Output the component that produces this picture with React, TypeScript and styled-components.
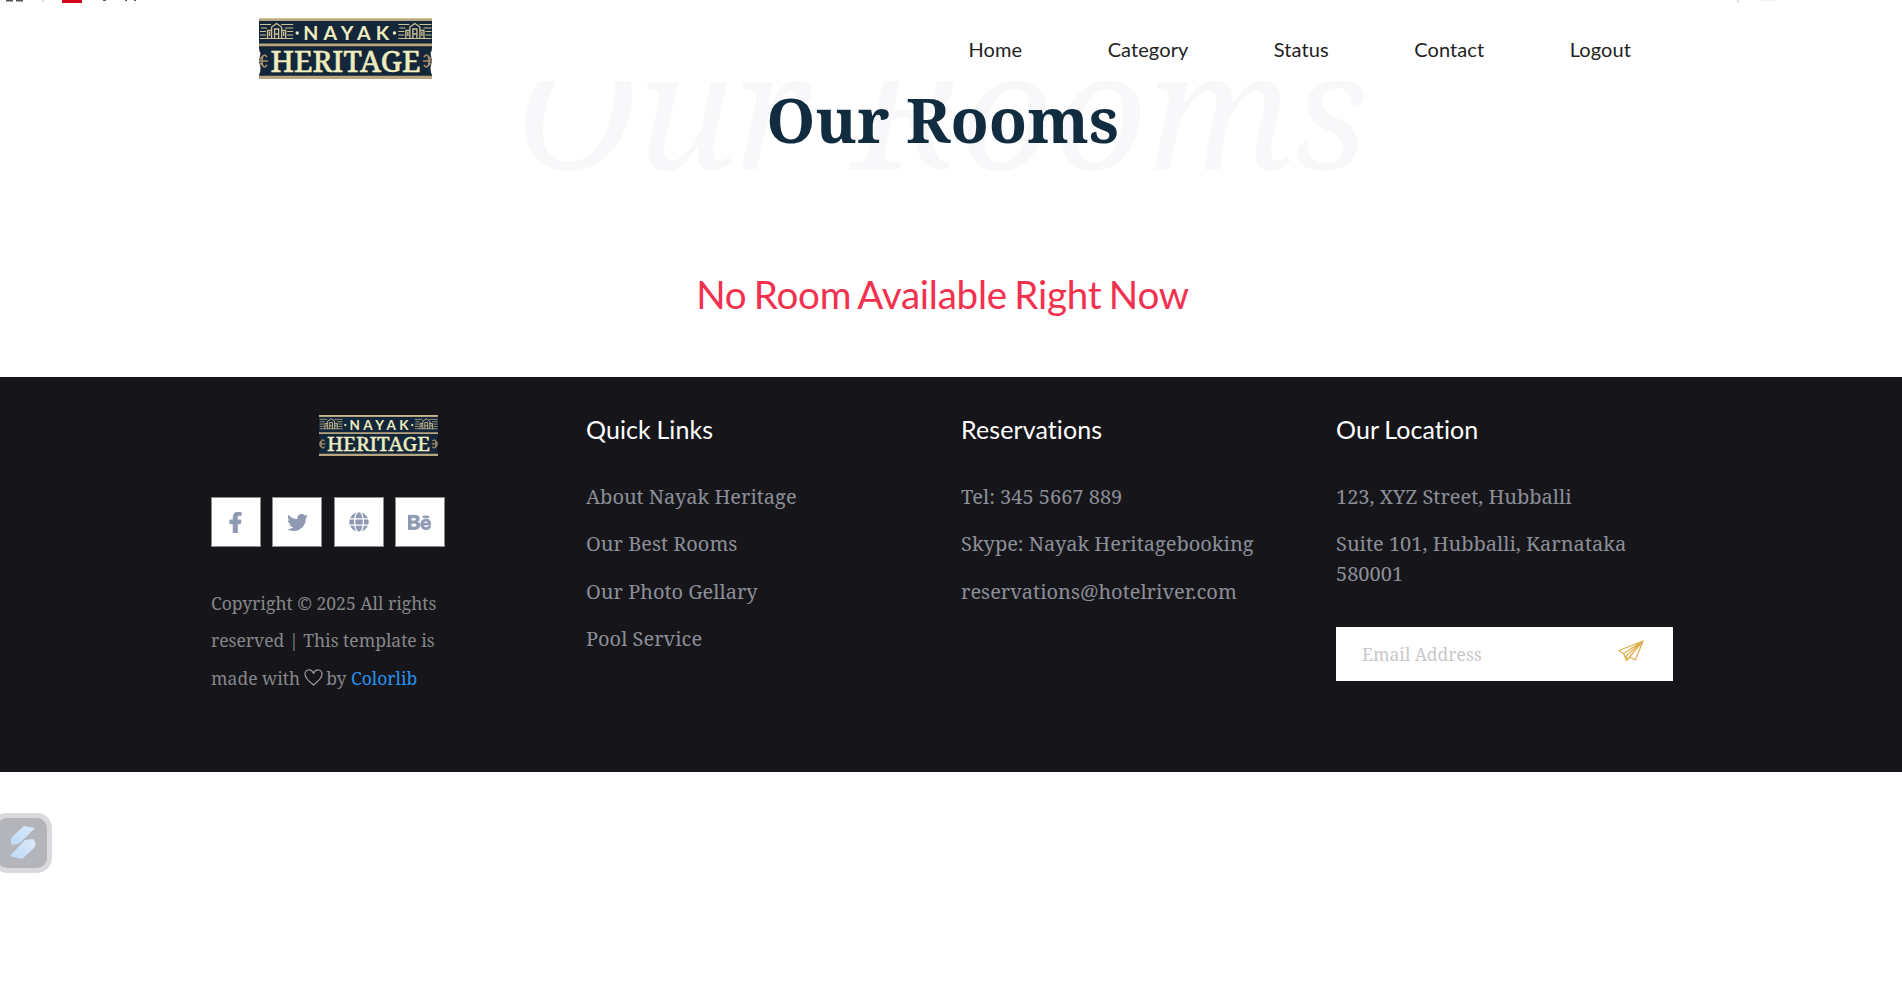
import React from "react";
import styled, { createGlobalStyle } from "styled-components";
import { FaBehance, FaFacebookF, FaGlobe, FaTwitter } from "react-icons/fa";

const serif = '"Noto Serif", "DejaVu Serif", serif';
const sans = 'Lato, "Open Sans", sans-serif';

const GlobalStyle = createGlobalStyle`
  *, *::before, *::after { box-sizing: border-box; }
  html { overflow: hidden; }
  body {
    margin: 0;
    background: #fff;
    font-family: ${serif};
    font-variant-ligatures: none;
    overflow: hidden;
  }
  h1, h2, h3, p, ul { margin: 0; padding: 0; font-weight: 400; }
  ul { list-style: none; }
  a { color: inherit; text-decoration: none; }
`;

const Header = styled.header`
  position: fixed;
  inset: 0 0 auto 0;
  z-index: 10;
  height: 81px;
  background: #fff;
  display: flex;
  justify-content: space-between;
  align-items: flex-start;
  padding: 18px 271px 0 259px;
`;

const Nav = styled.nav`
  display: flex;
  gap: 85.4px;
  padding-top: 16px;
  font-family: ${sans};
  font-size: 20px;
  line-height: 30px;
  letter-spacing: 0.1px;
  color: #222;
`;

const TabStrip = styled.svg`
  position: absolute;
  left: 0;
  top: 0;
`;

const Title = styled.section`
  position: relative;
  width: 1885px;
  padding-top: 81px;
  text-align: center;
`;

const Ghost = styled.span`
  position: absolute;
  left: 0;
  right: 0;
  top: 25px;
  font: italic 400 162.5px/1 ${serif};
  color: #f8f8fb;
`;

const Heading = styled.h1`
  position: relative;
  font-size: 62.5px;
  font-weight: 700;
  line-height: 75px;
  color: #112b3f;
`;

const Notice = styled.h2`
  width: 1885px;
  padding: 116px 0 60px;
  font-family: ${sans};
  font-size: 38.6px;
  line-height: 45px;
  letter-spacing: -0.25px;
  word-spacing: -2.2px;
  text-align: center;
  color: #f2314f;
`;

const Footer = styled.footer`
  height: 395px;
  padding: 37px 0 0 211px;
  background: #16161a;
  color: #8c8e98;
  display: grid;
  grid-template-columns: repeat(4, 337px);
  column-gap: 38px;
`;

const ColumnTitle = styled.h3`
  margin-bottom: 38px;
  font-family: ${sans};
  font-size: 25px;
  line-height: 30px;
  letter-spacing: 0.1px;
  word-spacing: -1px;
  color: #fff;
`;

const Links = styled.ul`
  display: flex;
  flex-direction: column;
  gap: 17.4px;
  font-size: 20px;
  line-height: 30px;
`;

const FooterLogo = styled.div`
  display: flex;
  padding: 1px 0 0 108px;
`;

const Socials = styled.div`
  display: flex;
  gap: 11.4px;
  margin: 41px 0 37.6px;
`;

const SocialButton = styled.a<{ $bold?: boolean }>`
  width: 50px;
  height: 50px;
  border: 1px solid #8b8b8b;
  background: #fff;
  color: #8f9ab2;
  display: flex;
  align-items: center;
  justify-content: center;
  svg {
    margin-right: ${(p) => (p.$bold ? "1px" : 0)};
    stroke: currentColor;
    stroke-width: ${(p) => (p.$bold ? 22 : 0)};
  }
`;

const Copyright = styled.p`
  width: 240px;
  font-size: 17.5px;
  line-height: 37.5px;
  color: #86878b;
  svg { margin: 0 -1.5px -1px -0.5px; }
  a { color: #2492ee; }
`;

const Subscribe = styled.form`
  display: flex;
  align-items: center;
  justify-content: space-between;
  height: 54px;
  margin-top: 38px;
  padding: 0 29px 0 26px;
  background: #fff;
`;

const EmailInput = styled.input`
  width: 220px;
  padding: 0;
  border: 0;
  outline: 0;
  font: 17.5px/26px ${serif};
  &::placeholder { color: #c8c8c8; opacity: 1; }
`;

const Send = styled.button`
  display: flex;
  padding: 0 0 6px;
  border: 0;
  background: none;
`;

const Widget = styled.div`
  position: fixed;
  left: -8px;
  top: 813px;
  width: 60px;
  height: 60px;
  border: 5px solid #d9d9de;
  border-radius: 15px;
  background: #b4b5ba;
`;

function House({ x }: { x: number }) {
  return (
    <g transform={`translate(${x} 0)`} stroke="#cfc193" fill="none" strokeWidth="1">
      <path d="M0 6.5h11M21 6.5h12M1 10h6M25 10h8M0 13.5h6M27 13.5h6M0 17h6M27 17h6M0 20.5h33" />
      <path d="M11.5 21V9L16.5 5.5 21.5 9V21M7.5 21V12.5h4M21.5 12.5h4V21M14.5 21V11h4V21M9.5 14v4M23.5 14v4M14.5 16h4" strokeWidth="1.3" />
    </g>
  );
}

function Logo({ width, height }: { width: number; height: number }) {
  return (
    <svg width={width} height={height} viewBox="0 0 172 61" preserveAspectRatio="none">
      <path d="M0 0H172V30Q172 33 170.500 35L172 43 170.500 50Q170.500 54 172 57V61H0V57Q1.500 54 1.500 50L0 43 1.500 35Q0 33 0 30Z" fill="#14263a" />
      <path d="M0 0H172V3H0ZM0 25.5H172V28.3H0ZM0 57.7H172V61H0Z" fill="#b7a57f" />
      <path d="M0 .6H172" stroke="#d8cda9" strokeWidth=".8" />
      <House x={1} />
      <House x={138.5} />
      <g fill="#eeecbe">
        <circle cx="38" cy="15" r="1.7" />
        <circle cx="134.7" cy="15" r="1.7" />
        <text x="44" y="22.3" fontFamily={sans} fontSize="19.5" fontWeight="700" textLength="85.500" lengthAdjust="spacing">NAYAK</text>
        <text x="11.5" y="54" fontFamily={serif} fontSize="29.5" fontWeight="500" textLength="149" lengthAdjust="spacingAndGlyphs" stroke="#eeecbe" strokeWidth=".4">HERITAGE</text>
      </g>
      <g fill="none" stroke="#a98e69" strokeWidth="1.7">
        <path d="M8 39Q5 35 3.500 39T3.500 47Q5 51 8 47M0 43H9M1 41 4 38M1 45 4 48" />
        <path d="M164 39Q167 35 168.500 39T168.500 47Q167 51 164 47M172 43H163M171 41 168 38M171 45 168 48" />
      </g>
    </svg>
  );
}

const navItems = ["Home", "Category", "Status", "Contact", "Logout"];
const quickLinks = ["About Nayak Heritage", "Our Best Rooms", "Our Photo Gellary", "Pool Service"];
const reservations = ["Tel: 345 5667 889", "Skype: Nayak Heritagebooking", "reservations@hotelriver.com"];
const address = ["123, XYZ Street, Hubballi", "Suite 101, Hubballi, Karnataka 580001"];

function LinkColumn({ title, items, children }: { title: string; items: string[]; children?: React.ReactNode }) {
  return (
    <div>
      <ColumnTitle>{title}</ColumnTitle>
      <Links>{items.map((t) => <li key={t}>{t}</li>)}</Links>
      {children}
    </div>
  );
}

export default function App() {
  return (
    <>
      <GlobalStyle />
      <Header>
        <TabStrip width="1902" height="4">
          <path d="M6 0h7v1.500H6zM16 0h7v1.500h-7zM103 0h3v1h-3zM125 0h2v1h-2zM134 0h2v1h-2z" fill="#555" />
          <path d="M62 0h20v3H62z" fill="#d4061c" />
          <path d="M42 0h2v2h-2zM1737 0h2v3h-2z" fill="#dcdce4" />
          <path d="M1760 0h18v1h-18z" fill="#f2f2f2" />
        </TabStrip>
        <Logo width={173} height={61} />
        <Nav>{navItems.map((t) => <a key={t} href="#">{t}</a>)}</Nav>
      </Header>
      <Title>
        <Ghost>Our Rooms</Ghost>
        <Heading>Our Rooms</Heading>
      </Title>
      <Notice>No Room Available Right Now</Notice>
      <Footer>
        <div>
          <FooterLogo><Logo width={119} height={41} /></FooterLogo>
          <Socials>
            <SocialButton href="#" $bold><FaFacebookF size={21} /></SocialButton>
            <SocialButton href="#"><FaTwitter size={21} /></SocialButton>
            <SocialButton href="#"><FaGlobe size={20} /></SocialButton>
            <SocialButton href="#" $bold><FaBehance size={23} /></SocialButton>
          </Socials>
          <Copyright>
            Copyright © 2025 All rights reserved | This template is made with{" "}
            <svg width="19" height="17" viewBox="0 0 19 17" fill="none" stroke="#9a9a9d" strokeWidth="1.2">
              <path d="M9.500 16Q1 9.500 1 5.300C1 .2 7.200-.7 9.500 4.200 11.800-.7 18 .2 18 5.300Q18 9.500 9.500 16Z" />
            </svg>{" "}
            by <a href="#">Colorlib</a>
          </Copyright>
        </div>
        <LinkColumn title="Quick Links" items={quickLinks} />
        <LinkColumn title="Reservations" items={reservations} />
        <LinkColumn title="Our Location" items={address}>
          <Subscribe>
            <EmailInput placeholder="Email Address" />
            <Send type="button">
              <svg width="26" height="22" viewBox="0 0 26 22" fill="none" stroke="#dfb050" strokeWidth="1.300" strokeLinejoin="round">
                <path d="M25 1 1 10.500 5.500 13.500ZM25 1 5.500 13.500 8.500 20.500 11.500 17ZM25 1 11.500 17 17.500 19.800ZM25 1 8.500 15.500V20.500" />
              </svg>
            </Send>
          </Subscribe>
        </LinkColumn>
      </Footer>
      <Widget>
        <svg width="50" height="50" viewBox="0 0 50 50">
          <defs>
            <linearGradient id="blade" x1="0" y1="1" x2="1" y2="0">
              <stop offset="0" stopColor="#bcdaf8" />
              <stop offset="1" stopColor="#dceafa" />
            </linearGradient>
          </defs>
          <path d="M27 8 38 10 23 25 15 27Q12 22 16 18Z" fill="url(#blade)" />
          <path d="M28 22 36 21Q41 26 36 31L25 41 13 38Z" fill="url(#blade)" />
        </svg>
      </Widget>
    </>
  );
}
